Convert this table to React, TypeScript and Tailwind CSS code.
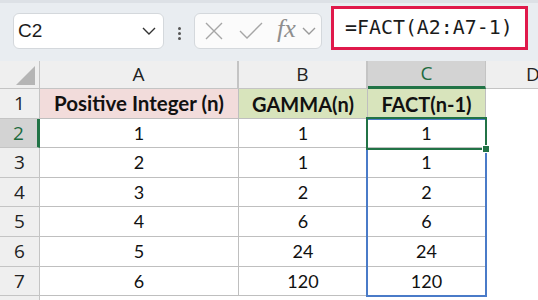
import React from "react";

const rows: [string, string, string][] = [
  ["1", "1", "1"],
  ["2", "1", "1"],
  ["3", "2", "2"],
  ["4", "6", "6"],
  ["5", "24", "24"],
  ["6", "120", "120"],
];

const rowHeights = ["h-[30px]", "h-[29px]", "h-[30px]", "h-[29px]", "h-[30px]", "h-[30px]", "h-[29px]"];

const uiFont = { fontFamily: '"Open Sans", "Noto Sans", sans-serif' };
const cellFont = { fontFamily: 'Lato, "Noto Sans", sans-serif' };

function Chevron({ className }: { className?: string }) {
  return (
    <svg width="14" height="8" viewBox="0 0 14 8" className={className}>
      <path d="M1 1 L7 7 L13 1" fill="none" stroke="currentColor" strokeWidth="1.4" />
    </svg>
  );
}

function Toolbar() {
  return (
    <div className="relative h-[61px] bg-[#e9edf1] border-t-[3px] border-[#dde1e6]">
      <div className="flex items-start">
        <div className="ml-[13px] mt-[10px] w-[151px] h-[36px] bg-white border border-[#d4d8dc] rounded-[6px] flex items-center pl-[4px] pr-[7px]">
          <span className="text-[19px] text-[#1b1b1b]" style={{ fontFamily: '"Liberation Sans", Arial, sans-serif' }}>
            C2
          </span>
          <Chevron className="ml-auto text-[#333]" />
        </div>
        <div className="ml-[14px] mt-[24px] flex flex-col gap-[2px]">
          <span className="w-[3px] h-[3px] bg-[#555] rounded-full" />
          <span className="w-[3px] h-[3px] bg-[#555] rounded-full" />
          <span className="w-[3px] h-[3px] bg-[#555] rounded-full" />
        </div>
        <div className="ml-[13px] mt-[10px] w-[128px] h-[36px] bg-[#fbfbfb] border border-[#d4d8dc] rounded-[6px] flex items-center pl-[9px] text-[#a6a6a6]">
          <svg width="20" height="20" viewBox="0 0 20 20">
            <path d="M2 2 L18 18 M18 2 L2 18" stroke="currentColor" strokeWidth="1.4" fill="none" />
          </svg>
          <svg width="26" height="20" viewBox="0 0 26 20" className="ml-[14px]">
            <path d="M2 10 L9 17 L24 2" stroke="currentColor" strokeWidth="1.4" fill="none" />
          </svg>
          <span
            className="ml-[13px] text-[26px] italic leading-none text-[#8e8e8e] -mt-[4px]"
            style={{ fontFamily: '"Liberation Serif", "Times New Roman", serif' }}
          >
            fx
          </span>
          <Chevron className="ml-[6px] text-[#9a9a9a]" />
        </div>
        <div className="ml-[9px] mt-[3px] w-[197px] h-[44px] bg-white border-[3px] border-[#e0194b] flex items-center pl-[11px]">
          <span className="text-[19.9px] text-[#1b1b1b]" style={{ fontFamily: '"DejaVu Sans Mono", "Liberation Mono", monospace' }}>
            =FACT(A2:A7-1)
          </span>
        </div>
      </div>
    </div>
  );
}

function HeaderRow() {
  return (
    <div className="flex h-[28px] bg-[#efefef] text-[19px] text-[#222]" style={uiFont}>
      <div className="w-[40px] shrink-0 border-r border-[#c4c4c4] border-b relative">
        <svg width="20" height="19" viewBox="0 0 20 19" className="absolute left-[16px] top-[5px]">
          <path d="M19 0 L19 19 L0 19 Z" fill="#b5b5b5" />
        </svg>
      </div>
      <div className="w-[199px] shrink-0 border-r-2 border-[#c4c4c4] border-b border-b-[#c4c4c4] flex items-center justify-center">A</div>
      <div className="w-[129px] shrink-0 border-r-2 border-[#c4c4c4] border-b border-b-[#c4c4c4] flex items-center justify-center">B</div>
      <div className="w-[118px] shrink-0 bg-[#d3d3d3] border-r border-[#c4c4c4] border-b-[3px] border-b-[#217346] flex items-center justify-center text-[#1d6b40]">
        C
      </div>
      <div className="w-[94px] shrink-0 border-b border-[#c4c4c4] flex items-center pl-[40px]">D</div>
    </div>
  );
}

function RowHeader({ n, selected, h }: { n: number; selected?: boolean; h: string }) {
  return (
    <div
      className={
        selected
          ? `w-[40px] ${h} shrink-0 bg-[#d3d3d3] border-r-[3px] border-[#217346] border-b border-b-[#c4c4c4] flex items-center justify-center text-[19px] text-[#1d6b40]`
          : `w-[40px] ${h} shrink-0 bg-[#efefef] border-r border-[#c4c4c4] border-b flex items-center justify-center text-[19px] text-[#222]`
      }
      style={uiFont}
    >
      {n}
    </div>
  );
}

export default function App() {
  return (
    <div className="w-[538px] h-[300px] overflow-hidden bg-white">
      <Toolbar />
      <div className="relative">
        <HeaderRow />
        <div className="flex">
          <RowHeader n={1} h={rowHeights[0]} />
          <div
            className="w-[199px] h-[30px] shrink-0 bg-[#f2dcdb] border-r border-b border-[#bfbfbf] flex items-center justify-center text-[20.5px] font-bold text-[#111]"
            style={cellFont}
          >
            Positive Integer (n)
          </div>
          <div
            className="w-[129px] h-[30px] shrink-0 bg-[#d8e4bc] border-r border-b border-[#bfbfbf] flex items-center justify-center text-[20px] font-bold text-[#111]"
            style={cellFont}
          >
            GAMMA(n)
          </div>
          <div
            className="w-[118px] h-[30px] shrink-0 bg-[#d8e4bc] border-r border-b border-[#bfbfbf] flex items-center justify-center text-[20px] font-bold text-[#111]"
            style={cellFont}
          >
            FACT(n-1)
          </div>
        </div>
        {rows.map((r, i) => (
          <div className="flex" key={i}>
            <RowHeader n={i + 2} selected={i === 0} h={rowHeights[i + 1]} />
            {r.map((v, j) => (
              <div
                key={j}
                className={`${j === 0 ? "w-[199px]" : j === 1 ? "w-[129px]" : "w-[118px]"} ${rowHeights[i + 1]} shrink-0 border-r border-b border-[#bfbfbf] flex items-center justify-center text-[18px] text-[#111]`}
                style={cellFont}
              >
                {v}
              </div>
            ))}
          </div>
        ))}
        <div className="flex">
          <div className="w-[40px] h-[10px] bg-[#efefef] border-r border-[#c4c4c4]" />
        </div>

        {/* selection overlays */}
        <div className="absolute left-[366px] top-[57px] w-[121px] h-[179px] border-2 border-[#4a7bc8] pointer-events-none" />
        <div className="absolute left-[366px] top-[56px] w-[121px] h-[33px] border-2 border-[#217346] pointer-events-none" />
        <div className="absolute left-[482px] top-[84px] w-[8px] h-[8px] bg-[#217346] border border-white pointer-events-none" />
      </div>
    </div>
  );
}
